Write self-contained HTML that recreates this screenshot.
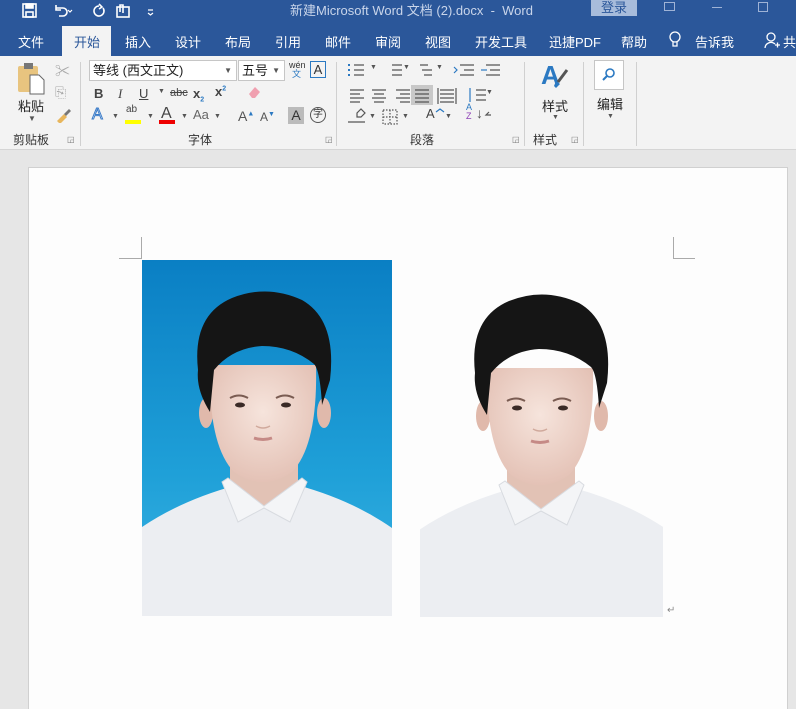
<!DOCTYPE html>
<html><head><meta charset="utf-8"><style>
*{margin:0;padding:0;box-sizing:border-box}
body{width:796px;height:709px;overflow:hidden;background:#e6e6e6;font-family:"Liberation Sans","Noto Sans CJK SC",sans-serif;position:relative}
.a{position:absolute;white-space:nowrap}
.title{left:0;top:0;width:796px;height:56px;background:#2b579a}
.tab{color:#fff;font-size:13px;top:32px}
.rib{left:0;top:56px;width:796px;height:94px;background:#f3f3f3;border-bottom:1px solid #d5d5d5}
.sep{width:1px;background:#d0d0d0;top:62px;height:84px}
.g{font-size:12px;color:#333}
.ic{font-size:13px;color:#444}
</style></head><body>
<div class="a title"></div>
<svg class="a" style="left:20px;top:2px" width="150" height="18" viewBox="0 0 150 18" fill="none" stroke="#fff" stroke-width="1.6">
<rect x="3" y="2" width="13" height="13"/><rect x="6" y="2" width="7" height="4" fill="#fff"/><rect x="6" y="10" width="7" height="5"/>
<path d="M36 6h7a4 4 0 010 8h-4"/><path d="M36 3v5h5" fill="none"/>
<path d="M48 8l2 2 2-2" stroke-width="1.2"/>
<path d="M79 4a5 5 0 104 2"/><path d="M79 2l3 3-3 2"/>
<rect x="97" y="5" width="12" height="10"/><path d="M100 10V3h3v8"/>
<path d="M128 8h5M128 11l2.5 2 2.5-2" stroke-width="1.2"/>
</svg>
<div class="a" style="left:290px;top:0;color:#c9d5ea;font-size:13px">新建Microsoft Word 文档 (2).docx &nbsp;-&nbsp; Word</div>
<div class="a" style="left:591px;top:0;width:46px;height:16px;background:#a8bcdb;color:#2b579a;font-size:13px;text-align:center;line-height:16px">登录</div>
<div class="a" style="left:664px;top:2px;width:11px;height:9px;border:1px solid #9fb3d6"></div>
<div class="a" style="left:712px;top:7px;width:10px;height:1px;background:#9fb3d6"></div>
<div class="a" style="left:758px;top:2px;width:10px;height:10px;border:1px solid #9fb3d6"></div>
<div class="a" style="left:62px;top:26px;width:49px;height:30px;background:#f3f3f3"></div>
<div class="a tab" style="left:18px">文件</div>
<div class="a tab" style="left:74px;color:#2b579a">开始</div>
<div class="a tab" style="left:125px">插入</div>
<div class="a tab" style="left:175px">设计</div>
<div class="a tab" style="left:225px">布局</div>
<div class="a tab" style="left:275px">引用</div>
<div class="a tab" style="left:325px">邮件</div>
<div class="a tab" style="left:375px">审阅</div>
<div class="a tab" style="left:425px">视图</div>
<div class="a tab" style="left:475px">开发工具</div>
<div class="a tab" style="left:549px">迅捷PDF</div>
<div class="a tab" style="left:621px">帮助</div>
<svg class="a" style="left:668px;top:31px" width="14" height="18"><circle cx="7" cy="6" r="5" fill="none" stroke="#fff" stroke-width="1.3"/><path d="M5 11v4h4v-4" fill="none" stroke="#fff" stroke-width="1.3"/></svg>
<div class="a tab" style="left:695px">告诉我</div>
<svg class="a" style="left:764px;top:32px" width="16" height="18"><circle cx="7" cy="5" r="4" fill="none" stroke="#fff" stroke-width="1.3"/><path d="M1 16a6 6 0 0110-4M11 13h5M13.5 10.5v5" fill="none" stroke="#fff" stroke-width="1.3"/></svg>
<div class="a tab" style="left:783px">共</div>

<div class="a rib"></div>
<svg class="a" style="left:16px;top:62px" width="32" height="34"><rect x="2" y="4" width="20" height="26" fill="#e8c47f" rx="2"/><rect x="8" y="1" width="9" height="6" fill="#777"/><path d="M14 13h9l5 5v14H14z" fill="#fff" stroke="#666"/></svg>
<div class="a" style="left:18px;top:96px;font-size:13px;color:#222">粘贴</div>
<div class="a" style="left:28px;top:114px;font-size:8px;color:#555">▼</div>
<div class="a" style="left:55px;top:60px;font-size:15px;color:#aaa">✂</div>
<div class="a" style="left:55px;top:84px;font-size:14px;color:#aaa">⎘</div>
<svg class="a" style="left:55px;top:107px" width="16" height="16"><path d="M2 14l7-7 3 3-7 7z" fill="#e8b65c"/><path d="M9 7l5-5 2 2-5 5z" fill="#777"/></svg>
<div class="a g" style="left:13px;top:131px">剪贴板</div>
<div class="a" style="left:67px;top:135px;font-size:8px;color:#777">◲</div>
<div class="a sep" style="left:80px"></div>
<div class="a" style="left:89px;top:60px;width:148px;height:21px;background:#fff;border:1px solid #c6c6c6;font-size:13px;line-height:19px;padding-left:3px;color:#222">等线 (西文正文)<span style="position:absolute;right:4px;font-size:8px;color:#555">▼</span></div>
<div class="a" style="left:238px;top:60px;width:47px;height:21px;background:#fff;border:1px solid #c6c6c6;font-size:13px;line-height:19px;padding-left:3px;color:#222">五号<span style="position:absolute;right:4px;font-size:8px;color:#555">▼</span></div>
<div class="a" style="left:289px;top:61px;font-size:9px;color:#333;line-height:9px">wén<br><span style="color:#2b79c2;padding-left:3px">文</span></div>
<div class="a" style="left:310px;top:61px;width:16px;height:17px;border:1px solid #2b79c2;font-size:13px;text-align:center;line-height:15px;color:#333">A</div>
<div class="a ic" style="left:94px;top:86px;font-weight:bold">B</div>
<div class="a ic" style="left:118px;top:86px;font-style:italic;font-family:'Liberation Serif',serif">I</div>
<div class="a ic" style="left:139px;top:86px;text-decoration:underline">U</div>
<div class="a" style="left:158px;top:88px;font-size:7px;color:#555">▼</div>
<div class="a" style="left:170px;top:87px;font-size:11px;color:#444;text-decoration:line-through">abc</div>
<div class="a ic" style="left:193px;top:86px;font-weight:bold">x<sub style="font-size:7px;color:#2b79c2">2</sub></div>
<div class="a ic" style="left:215px;top:84px;font-weight:bold">x<sup style="font-size:7px;color:#2b79c2">2</sup></div>
<svg class="a" style="left:246px;top:84px" width="16" height="16"><path d="M3 10l6-7 5 5-5 6H6z" fill="#f0a0b0"/></svg>
<div class="a" style="left:92px;top:106px;font-size:16px;color:#fff;-webkit-text-stroke:1px #3a7bc8">A</div>
<div class="a" style="left:112px;top:113px;font-size:7px;color:#555">▼</div>
<div class="a" style="left:126px;top:104px;font-size:10px;color:#444">ab</div>
<div class="a" style="left:125px;top:120px;width:16px;height:4px;background:#ffff00"></div>
<div class="a" style="left:147px;top:113px;font-size:7px;color:#555">▼</div>
<div class="a" style="left:161px;top:105px;font-size:16px;color:#444">A</div>
<div class="a" style="left:159px;top:120px;width:16px;height:4px;background:#e00"></div>
<div class="a" style="left:181px;top:113px;font-size:7px;color:#555">▼</div>
<div class="a" style="left:193px;top:107px;font-size:13px;color:#666">Aa</div>
<div class="a" style="left:214px;top:113px;font-size:7px;color:#555">▼</div>
<div class="a" style="left:238px;top:108px;font-size:14px;color:#555">A<sup style="font-size:7px;color:#2b79c2">▲</sup></div>
<div class="a" style="left:260px;top:110px;font-size:12px;color:#555">A<sup style="font-size:7px;color:#2b79c2">▼</sup></div>
<div class="a" style="left:288px;top:107px;width:16px;height:17px;background:#bbb;font-size:14px;text-align:center;color:#333;line-height:17px">A</div>
<div class="a" style="left:310px;top:107px;width:16px;height:16px;border:1px solid #555;border-radius:50%;font-size:10px;text-align:center;line-height:14px;color:#333">字</div>
<div class="a g" style="left:188px;top:131px">字体</div>
<div class="a" style="left:325px;top:135px;font-size:8px;color:#777">◲</div>
<div class="a sep" style="left:336px"></div>
<svg class="a" style="left:344px;top:60px" width="175" height="68" stroke="#555" stroke-width="1.2" fill="none">
<path d="M10 5h10M10 10h10M10 15h10" /><path d="M4 5h2M4 10h2M4 15h2" stroke="#2b79c2" stroke-width="2"/>
<path d="M48 5h10M48 10h10M48 15h10"/><path d="M76 5h8M78 10h10M80 15h8"/>
<path d="M116 5h14M120 10h10M116 15h14" /><path d="M110 7l3 3-3 3" stroke="#2b79c2"/>
<path d="M142 5h14M146 10h10M142 15h14" /><path d="M137 10h6" stroke="#2b79c2"/>
<path d="M6 30h14M6 34h10M6 38h14M6 42h10"/><path d="M28 30h14M30 34h10M28 38h14M30 42h10"/><path d="M52 30h14M56 34h10M52 38h14M56 42h10"/>
<rect x="67" y="25" width="22" height="20" fill="#c8c8c8" stroke="none"/><path d="M71 30h14M71 34h14M71 38h14M71 42h14"/>
<path d="M96 30h14M96 34h14M96 38h14M96 42h14M94 28v16M112 28v16"/>
<path d="M132 30h10M132 35h10M132 40h10"/><path d="M126 28v14" stroke="#2b79c2"/>
<path d="M13 57v-4l4-4 4 4-4 4z"/><path d="M4 62h17"/><path d="M39 50h14v14H39zM46 50v14M39 57h14" stroke-dasharray="1.5 1.5"/>
<path d="M92 52l4-3 4 3" stroke="#2b79c2"/>
<path d="M147 55h-5l3-3" />
</svg>
<div class="a" style="left:370px;top:64px;font-size:7px;color:#555">▼</div>
<div class="a" style="left:403px;top:64px;font-size:7px;color:#555">▼</div>
<div class="a" style="left:436px;top:64px;font-size:7px;color:#555">▼</div>
<div class="a" style="left:486px;top:89px;font-size:7px;color:#555">▼</div>
<div class="a" style="left:369px;top:113px;font-size:7px;color:#555">▼</div>
<div class="a" style="left:402px;top:113px;font-size:7px;color:#555">▼</div>
<div class="a" style="left:426px;top:106px;font-size:13px;color:#444">A</div>
<div class="a" style="left:445px;top:113px;font-size:7px;color:#555">▼</div>
<div class="a" style="left:466px;top:103px;font-size:9px;line-height:9px;color:#2b79c2">A<br><span style="color:#8c3fb5">Z</span></div>
<div class="a" style="left:476px;top:105px;font-size:14px;color:#555">↓</div>
<div class="a g" style="left:410px;top:131px">段落</div>
<div class="a" style="left:512px;top:135px;font-size:8px;color:#777">◲</div>
<div class="a sep" style="left:524px"></div>
<div class="a" style="left:541px;top:60px;font-size:26px;color:#2b79c2;font-weight:bold">A</div>
<svg class="a" style="left:553px;top:68px" width="16" height="22"><path d="M14 2l-9 12" stroke="#555" stroke-width="3"/><path d="M3 13l4 3-4 4-2-2z" fill="#2b79c2"/></svg>
<div class="a" style="left:542px;top:96px;font-size:13px;color:#222">样式</div>
<div class="a" style="left:552px;top:114px;font-size:7px;color:#555">▼</div>
<div class="a g" style="left:533px;top:131px">样式</div>
<div class="a" style="left:571px;top:135px;font-size:8px;color:#777">◲</div>
<div class="a sep" style="left:583px"></div>
<div class="a" style="left:594px;top:60px;width:30px;height:30px;border:1px solid #c6c6c6;background:#fff"></div>
<svg class="a" style="left:601px;top:67px" width="16" height="16"><circle cx="9" cy="6" r="4" fill="none" stroke="#2b79c2" stroke-width="1.6"/><path d="M6 9l-4 4" stroke="#2b79c2" stroke-width="2"/></svg>
<div class="a" style="left:597px;top:94px;font-size:13px;color:#222">编辑</div>
<div class="a" style="left:607px;top:113px;font-size:7px;color:#555">▼</div>
<div class="a sep" style="left:636px"></div>

<div class="a" style="left:28px;top:167px;width:760px;height:542px;background:#fdfdfd;border:1px solid #d0d0d0;border-bottom:none"></div>
<div class="a" style="left:119px;top:258px;width:22px;height:1px;background:#aaa"></div>
<div class="a" style="left:141px;top:237px;width:1px;height:22px;background:#aaa"></div>
<div class="a" style="left:673px;top:258px;width:22px;height:1px;background:#aaa"></div>
<div class="a" style="left:673px;top:237px;width:1px;height:22px;background:#aaa"></div>
<svg class="a" style="left:0;top:0" width="796" height="709">
<defs>
<linearGradient id="bg" x1="0" y1="0" x2="0" y2="1"><stop offset="0" stop-color="#0a7fc4"/><stop offset="0.6" stop-color="#1fa0d8"/><stop offset="1" stop-color="#3cb4e3"/></linearGradient>
<radialGradient id="sk" cx="0.5" cy="0.4" r="0.6"><stop offset="0" stop-color="#f6e4dc"/><stop offset="1" stop-color="#e4c2b6"/></radialGradient>
<g id="p">
<path d="M0 267 Q40 240 95 225 L120 215 L155 225 Q210 240 250 268 V356 H0 Z" fill="#eceef2"/>
<path d="M88 195 L88 232 Q120 262 156 232 L156 195Z" fill="#e2c2b5"/>
<path d="M80 222 L96 262 L122 248 L148 262 L165 222 L160 218 L122 246 L86 218Z" fill="#f4f5f7" stroke="#d8dbe0" stroke-width="1"/>
<ellipse cx="64" cy="153" rx="7" ry="15" fill="#e0b9ab"/><ellipse cx="182" cy="153" rx="7" ry="15" fill="#e0b9ab"/>
<path d="M68 105 Q66 185 92 212 Q121 232 150 212 Q176 185 174 105 Z" fill="url(#sk)"/>
<path d="M56 110 Q50 55 90 38 Q125 24 160 40 Q195 60 188 120 L180 145 Q178 110 172 104 Q150 86 120 86 Q90 88 72 110 L68 152 Q54 130 56 110Z" fill="#151515"/>
<path d="M88 138 q9 -5 18 0M134 138 q9 -5 18 0" stroke="#7a5c52" stroke-width="2" fill="none"/>
<ellipse cx="98" cy="145" rx="5" ry="2.5" fill="#3a2a26"/><ellipse cx="144" cy="145" rx="5" ry="2.5" fill="#3a2a26"/>
<path d="M112 178 q9 3 18 0" stroke="#c58a86" stroke-width="3" fill="none"/>
<path d="M114 166 q7 4 14 0" stroke="#d0a99c" stroke-width="1.5" fill="none"/>
</g>
<clipPath id="c2"><rect x="420" y="240" width="243" height="377"/></clipPath>
</defs>
<rect x="142" y="260" width="250" height="356" fill="url(#bg)"/>
<g transform="translate(142,260)"><use href="#p"/></g>
<g clip-path="url(#c2)"><g transform="translate(419,263)"><use href="#p"/></g></g>
</svg>
<div class="a" style="left:667px;top:605px;font-size:10px;color:#888">↵</div>
</body></html>
